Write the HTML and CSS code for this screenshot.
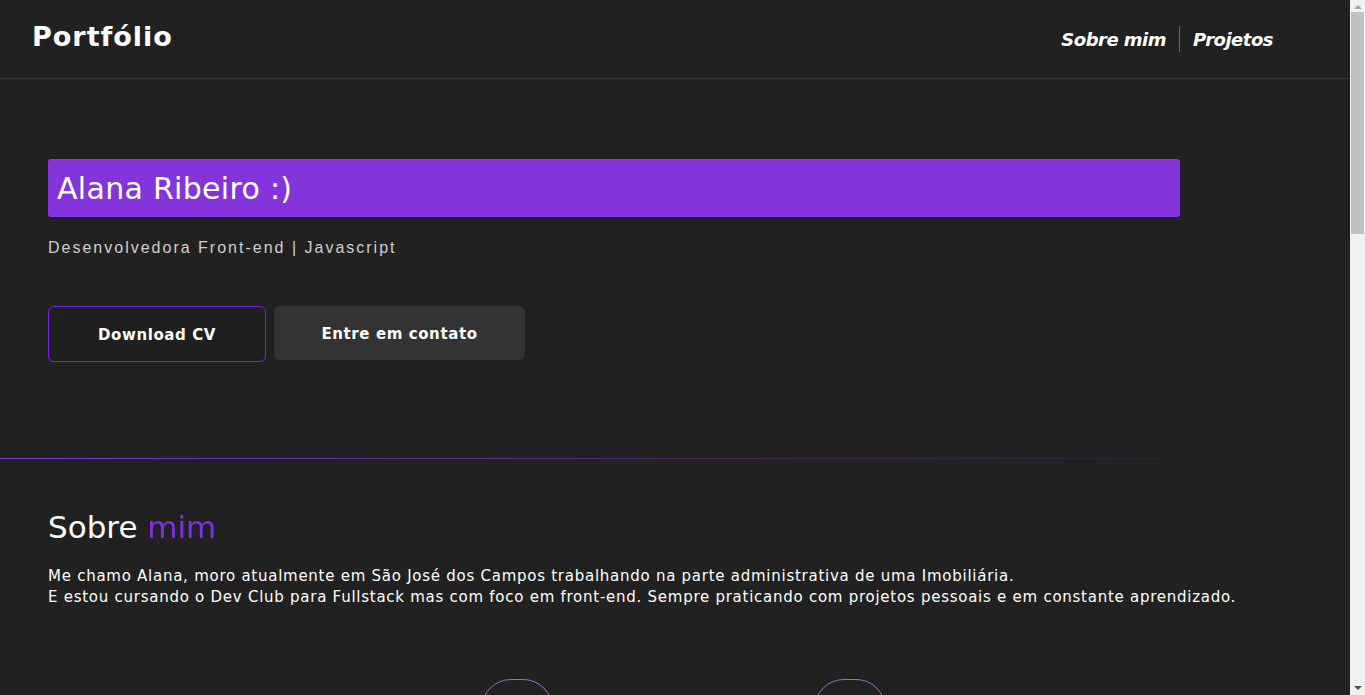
FILE: index.html
```html
<!DOCTYPE html>
<html lang="pt-BR">
<head>
<meta charset="utf-8">
<title>Portfólio</title>
<link rel="stylesheet" href="styles.css">
</head>
<body>
<div class="page">
<header class="topbar">
  <h1 class="logo">Portfólio</h1>
  <nav class="nav">
    <a class="nav-link" href="#sobre">Sobre mim</a>
    <span class="nav-sep"></span>
    <a class="nav-link" href="#projetos">Projetos</a>
  </nav>
</header>

<main>
  <section class="hero">
    <div class="banner"><h2 class="banner-title">Alana Ribeiro :)</h2></div>
    <p class="role">Desenvolvedora Front-end | Javascript</p>
    <div class="actions">
      <a class="btn btn-outline" href="#">Download CV</a>
      <a class="btn btn-fill" href="#">Entre em contato</a>
    </div>
  </section>

  <div class="divider"></div>

  <section class="about" id="sobre">
    <h2 class="section-title">Sobre <span class="accent">mim</span></h2>
    <p class="about-text">Me chamo Alana, moro atualmente em São José dos Campos trabalhando na parte administrativa de uma Imobiliária.<br>E estou cursando o Dev Club para Fullstack mas com foco em front-end. Sempre praticando com projetos pessoais e em constante aprendizado.</p>
    <div class="skills">
      <div class="skill"></div>
      <div class="skill"></div>
    </div>
  </section>

  <section class="projects" id="projetos">
    <h2 class="section-title">Projetos</h2>
    <div class="project-grid">
      <div class="project-card"></div>
      <div class="project-card"></div>
      <div class="project-card"></div>
    </div>
  </section>
</main>
</div>

<div class="scrollbar" aria-hidden="true">
  <span class="sb-arrow sb-up"></span>
  <span class="sb-thumb"></span>
  <span class="sb-arrow sb-down"></span>
</div>
</body>
</html>
```

FILE: styles.css
```css
* { box-sizing: border-box; }

html, body {
  margin: 0;
  padding: 0;
  background: #212121;
  color: #ffffff;
  font-family: "DejaVu Sans", "Open Sans", sans-serif;
}

.page {
  margin-right: 15px;
}

.topbar {
  height: 79px;
  border-bottom: 1px solid #353535;
  display: flex;
  align-items: center;
  justify-content: space-between;
  padding: 0 77px 0 32px;
}

.logo {
  margin: 0 0 6px 0;
  font-size: 27px;
  font-weight: 700;
  letter-spacing: 1px;
  line-height: 1;
}

.nav {
  display: flex;
  align-items: center;
  gap: 13px;
}

.nav-link {
  color: #ffffff;
  text-decoration: none;
  font-style: italic;
  font-weight: 700;
  font-size: 18px;
  letter-spacing: -0.5px;
}

.nav-sep {
  width: 1px;
  height: 26px;
  background: #6a6a6a;
}

.hero {
  padding: 80px 48px 96px;
}

.banner {
  max-width: 1132px;
  height: 58px;
  background: #8434db;
  border-radius: 3px;
  display: flex;
  align-items: center;
  padding-left: 9px;
}

.banner-title {
  margin: 0;
  font-size: 30px;
  font-weight: 500;
  letter-spacing: 0.3px;
}

.role {
  margin: 22px 0 0;
  font-family: "Liberation Sans", Arial, sans-serif;
  font-size: 16px;
  letter-spacing: 2px;
  color: #cfcfcf;
  line-height: 18px;
}

.actions {
  margin-top: 49px;
  display: flex;
  gap: 8px;
  align-items: flex-start;
}

.btn {
  display: flex;
  align-items: center;
  justify-content: center;
  color: #ffffff;
  text-decoration: none;
  font-weight: 700;
  font-size: 15px;
  letter-spacing: 0.6px;
  border-radius: 6px;
  padding-top: 1px;
}

.btn-outline {
  width: 218px;
  height: 56px;
  border: 1px solid #7a22e6;
  background: #1f1f1f;
}

.btn-fill {
  width: 251px;
  height: 54px;
  background: #333333;
}

.divider {
  height: 1px;
  background: linear-gradient(90deg, #8a2be2 0%, rgba(138, 43, 226, 0.45) 45%, rgba(138, 43, 226, 0) 96%);
}

.about {
  padding: 50px 48px 0;
}

.section-title {
  margin: 0;
  font-size: 31px;
  font-weight: 500;
  line-height: 36px;
}

.accent {
  background: linear-gradient(90deg, #8a2be2, #7b2ff7);
  -webkit-background-clip: text;
  background-clip: text;
  color: transparent;
}

.about-text {
  margin: 21px 0 0;
  font-size: 15px;
  line-height: 21px;
  letter-spacing: 0.74px;
}

.skills {
  margin-top: 71px;
  padding-left: 433px;
  display: flex;
  gap: 261px;
}

.skill {
  width: 72px;
  height: 72px;
  border: 1px solid #a06ad8;
  border-radius: 30px;
}

.projects {
  padding: 120px 48px 600px;
}

.project-grid {
  margin-top: 40px;
  display: grid;
  grid-template-columns: repeat(3, 1fr);
  gap: 24px;
}

.project-card {
  height: 360px;
  background: #2a2a2a;
  border-radius: 8px;
}

/* browser-like scrollbar overlay */
.scrollbar {
  position: fixed;
  top: 0;
  right: 0;
  width: 15px;
  height: 100vh;
  background: #f1f1f1;
  display: flex;
  flex-direction: column;
  align-items: center;
}

.sb-arrow {
  width: 0;
  height: 0;
  border-left: 4px solid transparent;
  border-right: 4px solid transparent;
}

.sb-up {
  margin-top: 5px;
  border-bottom: 4px solid #a3a3a3;
}

.sb-thumb {
  margin-top: 3px;
  width: 13px;
  height: 222px;
  background: #c1c1c1;
}

.sb-down {
  margin-top: auto;
  margin-bottom: 5px;
  border-top: 4px solid #505050;
}
```
